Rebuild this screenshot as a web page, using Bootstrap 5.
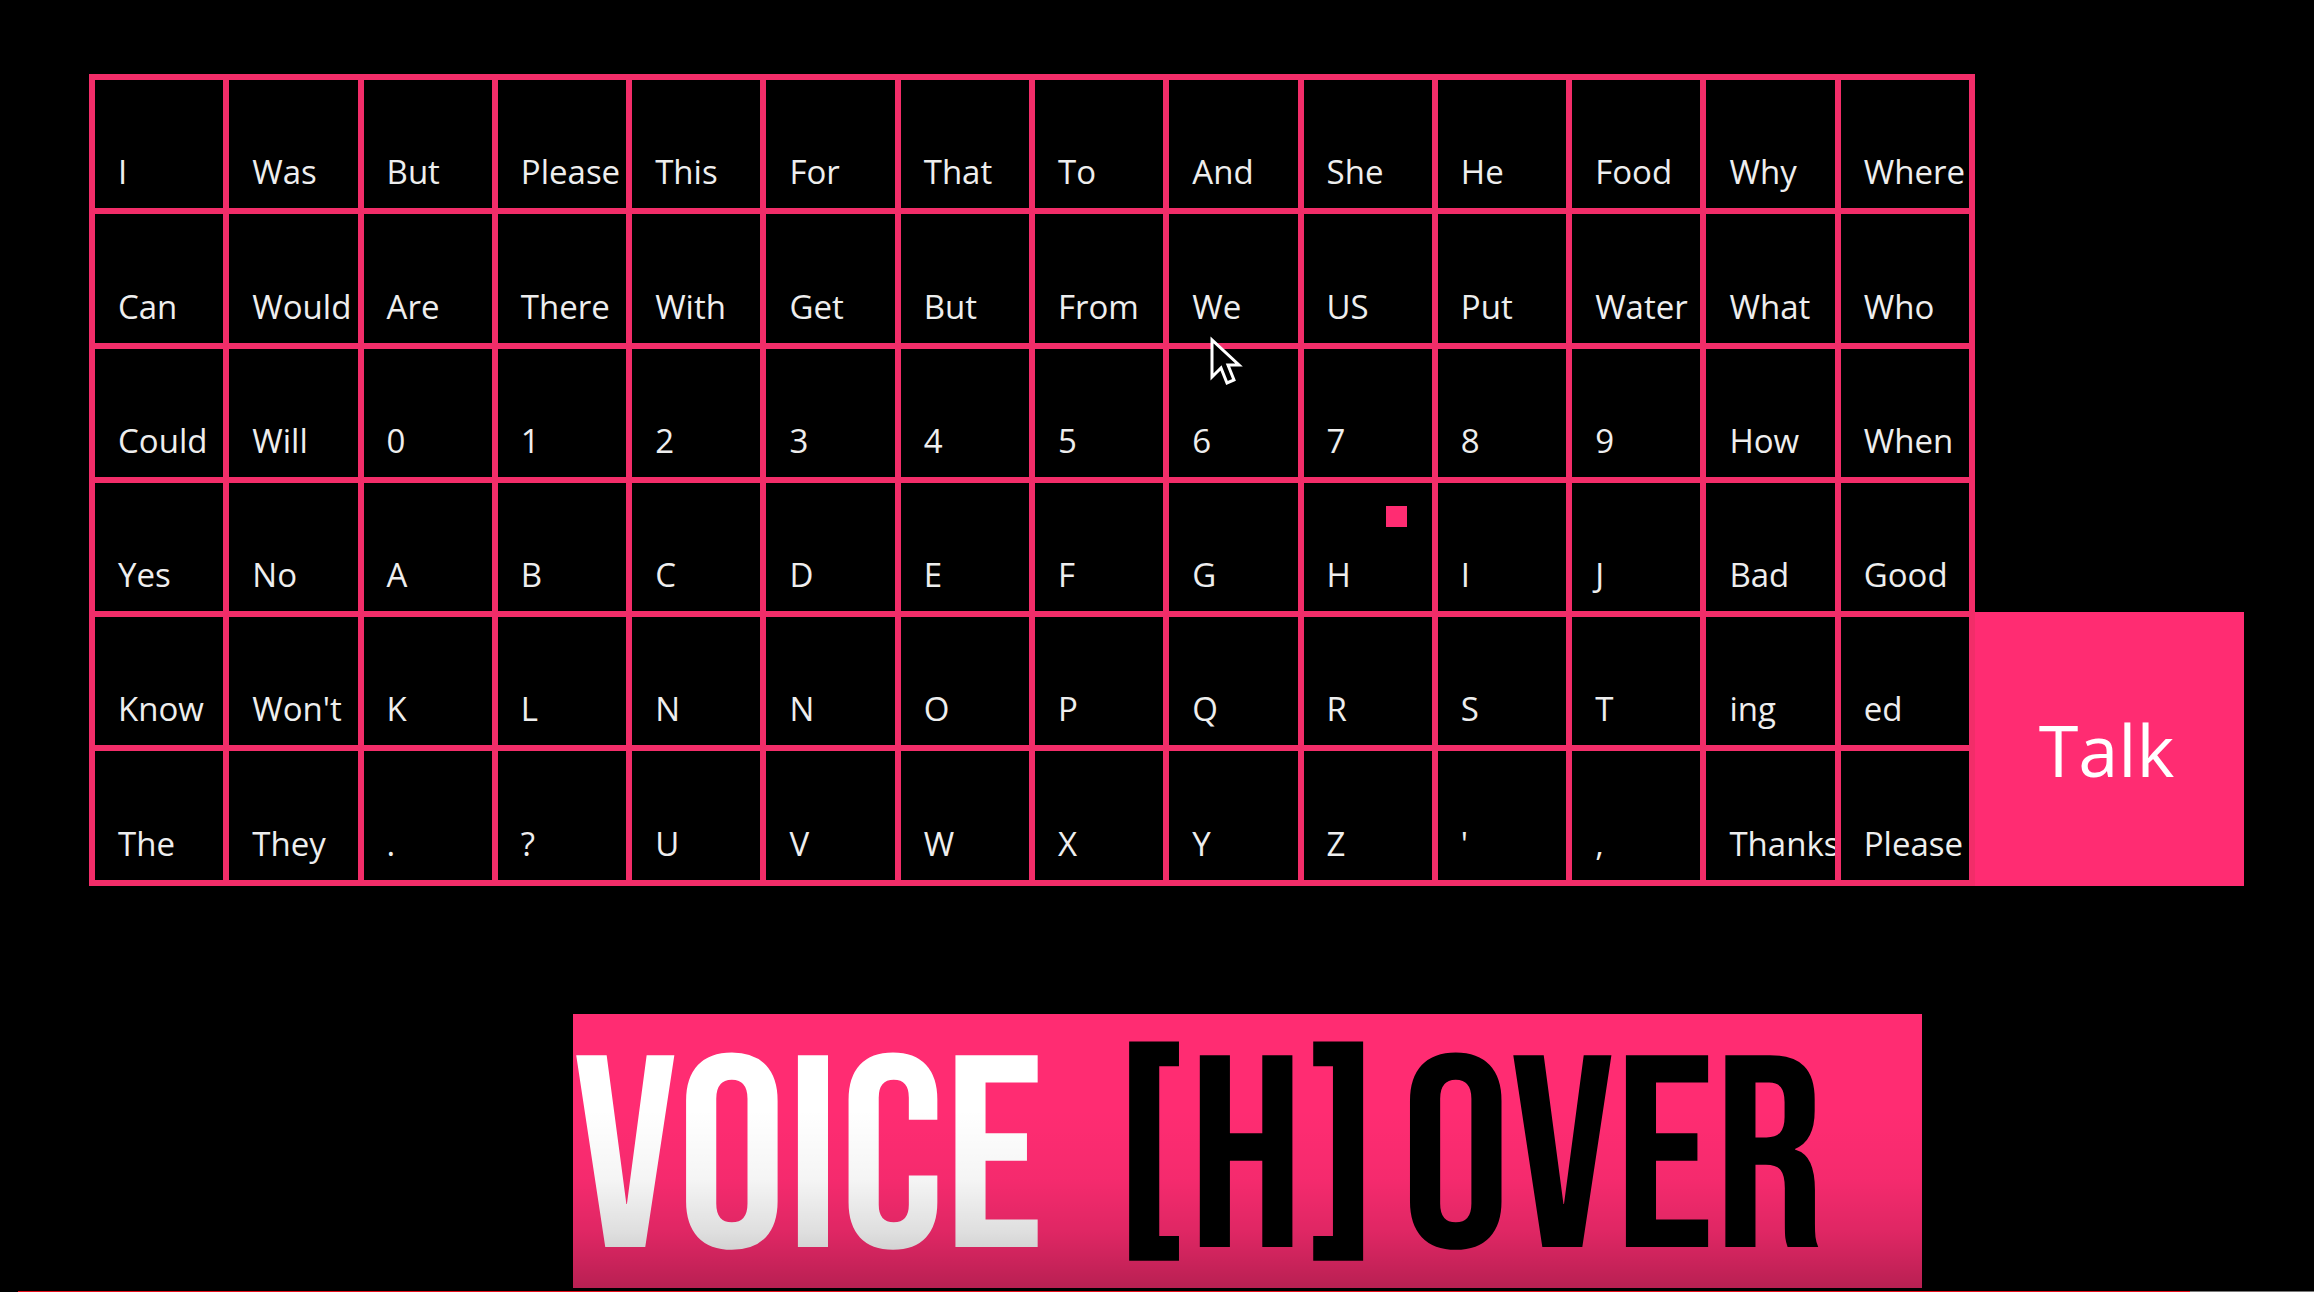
<!DOCTYPE html>
<html lang="en">
<head>
<meta charset="utf-8">
<meta name="viewport" content="width=device-width, initial-scale=1">
<title>Voice [H]over</title>
<link href="https://cdn.jsdelivr.net/npm/bootstrap@5.3.0/dist/css/bootstrap.min.css" rel="stylesheet">
<style>
  :root { --hot: #ff2c72; --line: #f22d69; }
  body { background: #000; font-family: "Open Sans", "Noto Sans", sans-serif; }
  .stage { padding: 74px 70px 0 89px; }
  .board { flex: 1874 1 0; display: grid; grid-template-columns: repeat(14, minmax(0, 1fr)); gap: 6px; padding: 6px; background: var(--line); }
  .board button { aspect-ratio: 1; min-width: 0; overflow: hidden; display: flex; align-items: flex-end; padding: 0 0 20px 23px; border: 0; background: #000; color: #eee; font-size: 33px; line-height: 32px; white-space: nowrap; }
  .board button:hover { background: #1c050d; }
  .talk { flex: 263 1 0; aspect-ratio: 269 / 274; border: 0; padding: 0 6px 0 0; background: var(--hot); color: #fff; font-size: 72px; line-height: 72px; }
  .pointer { left: 1119px; top: 260px; width: 36px; height: 54px; pointer-events: none; }
  .gaze { left: 1297px; top: 432px; width: 21px; height: 21px; background: var(--hot); pointer-events: none; }
  .banner { width: 58.3%; height: 274px; margin: 0 0 3px 24.76%; padding-top: 14px; display: grid; grid-template-columns: 540fr 288fr 521fr; background: var(--hot); font-family: "Bebas Neue", "Liberation Sans Narrow", "Liberation Sans", sans-serif; font-weight: 400; font-size: 274px; line-height: 274px; white-space: nowrap; }
  .banner::after { content: ""; position: absolute; inset: 0; background: linear-gradient(transparent 35%, rgba(0,0,0,.04) 60%, rgba(0,0,0,.13) 80%, rgba(0,0,0,.28)); }
  .playback { height: 1px; margin-left: 18px; border-radius: 0; background: #777; }
  .playback .progress-bar { background: #e5101c; }
</style>
</head>
<body class="d-flex flex-column min-vh-100">
<main class="stage d-flex align-items-end">
  <div class="board position-relative">
    <button>I</button><button>Was</button><button>But</button><button>Please</button><button>This</button><button>For</button><button>That</button><button>To</button><button>And</button><button>She</button><button>He</button><button>Food</button><button>Why</button><button>Where</button>
    <button>Can</button><button>Would</button><button>Are</button><button>There</button><button>With</button><button>Get</button><button>But</button><button>From</button><button>We</button><button>US</button><button>Put</button><button>Water</button><button>What</button><button>Who</button>
    <button>Could</button><button>Will</button><button>0</button><button>1</button><button>2</button><button>3</button><button>4</button><button>5</button><button>6</button><button>7</button><button>8</button><button>9</button><button>How</button><button>When</button>
    <button>Yes</button><button>No</button><button>A</button><button>B</button><button>C</button><button>D</button><button>E</button><button>F</button><button>G</button><button>H</button><button>I</button><button>J</button><button>Bad</button><button>Good</button>
    <button>Know</button><button>Won't</button><button>K</button><button>L</button><button>N</button><button>N</button><button>O</button><button>P</button><button>Q</button><button>R</button><button>S</button><button>T</button><button>ing</button><button>ed</button>
    <button>The</button><button>They</button><button>.</button><button>?</button><button>U</button><button>V</button><button>W</button><button>X</button><button>Y</button><button>Z</button><button>'</button><button>,</button><button>Thanks</button><button>Please</button>
    <span class="gaze position-absolute"></span>
    <svg class="pointer position-absolute" viewBox="0 0 36 54" aria-hidden="true"><path d="M4 6V43L13 34L19 49L26 46L20 31H31Z" fill="#000" stroke="#fff" stroke-width="3"/></svg>
  </div>
  <button class="talk">Talk</button>
</main>
<footer class="mt-auto">
  <h1 class="banner position-relative"><span class="text-white">VOICE</span><span class="text-black">[H]</span><span class="text-black">OVER</span></h1>
  <div class="playback progress" role="progressbar" aria-label="Playback" aria-valuenow="95" aria-valuemin="0" aria-valuemax="100"><div class="progress-bar" style="width:94.6%"></div></div>
</footer>
<script src="https://cdn.jsdelivr.net/npm/bootstrap@5.3.0/dist/js/bootstrap.bundle.min.js"></script>
</body>
</html>
